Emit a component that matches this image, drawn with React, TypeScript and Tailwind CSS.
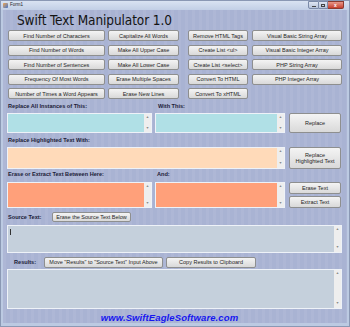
import React from 'react';

const Btn: React.FC<{ label: React.ReactNode; className?: string }> = ({ label, className = '' }) => (
    <button
        className={`flex items-center justify-center rounded-[2px] border border-[#8e8f8f] bg-gradient-to-b from-[#f4f4f4] to-[#d9d9d9] text-[5.5px] leading-[6px] text-[#1e1e1e] text-center ${className}`}
    >
        {label}
    </button>
);

const ScrollBar: React.FC = () => (
    <div className="w-[7px] h-full bg-[#eeeeee] flex flex-col justify-between items-center py-[2px] text-[3.5px] leading-none text-[#8a8a8a]">
        <span>▲</span>
        <span>▼</span>
    </div>
);

const Box: React.FC<{ className: string; scroll?: boolean }> = ({ className, scroll = true }) => (
    <div className={`flex justify-end border border-[#eef2f8] ${className}`}>
        {scroll && <ScrollBar />}
    </div>
);

const Label: React.FC<{ text: string; className?: string }> = ({ text, className = '' }) => (
    <span className={`text-[5.6px] font-bold leading-none text-[#1c1c38] ${className}`}>{text}</span>
);

const grid = [
    ['Find Number of Characters', 'Capitalize All Words', 'Remove HTML Tags', 'Visual Basic String Array'],
    ['Find Number of Words', 'Make All Upper Case', 'Create List <ul>', 'Visual Basic Integer Array'],
    ['Find Number of Sentences', 'Make All Lower Case', 'Create List <select>', 'PHP String Array'],
    ['Frequency Of Most Words', 'Erase Multiple Spaces', 'Convert To HTML', 'PHP Integer Array'],
    ['Number of Times a Word Appears', 'Erase New Lines', 'Convert To xHTML', ''],
];

export default function App() {
    return (
        <div className="w-[350px] h-[327px] bg-[#bccae2] border border-[#8a98b4] flex flex-col overflow-hidden" style={{ fontFamily: '"Liberation Sans", Arial, sans-serif' }}>
            {/* Title bar */}
            <div className="h-[9px] flex items-center justify-between bg-gradient-to-b from-[#d9e3f2] to-[#c2cfe6] pl-[2px]">
                <div className="flex items-center gap-[2px]">
                    <div className="w-[5px] h-[5px] bg-gradient-to-br from-[#f0a030] to-[#3a70c8] rounded-[1px]"></div>
                    <span className="text-[4.5px] text-[#222] leading-none">Form1</span>
                </div>
                <div className="flex items-start h-full pr-[5px]">
                    <div className="w-[11px] h-[8px] rounded-bl-[2px] border border-[#7b8aa8] bg-gradient-to-b from-[#dfe6f2] to-[#b6c3da] flex items-end justify-center pb-[1px]">
                        <div className="w-[4px] h-[1px] bg-[#444]"></div>
                    </div>
                    <div className="w-[9px] h-[8px] border-y border-r border-[#7b8aa8] bg-gradient-to-b from-[#dfe6f2] to-[#b6c3da] flex items-center justify-center">
                        <div className="w-[4px] h-[3px] border border-[#444]"></div>
                    </div>
                    <div className="w-[16px] h-[8px] rounded-br-[2px] border-y border-r border-[#8a3a30] bg-gradient-to-b from-[#e8978a] to-[#c63c2c] flex items-center justify-center text-white text-[5px] font-bold leading-none">
                        x
                    </div>
                </div>
            </div>

            {/* Client area */}
            <div className="mx-[2px] h-[313px] bg-[#a9b3d3] bg-[repeating-linear-gradient(90deg,rgba(255,255,255,0.06)_0px,rgba(255,255,255,0.06)_3px,transparent_3px,transparent_7px)] pl-[4px] pr-[5px] flex flex-col">
                <h1 className="mt-[2px] ml-[10px] h-[17px] text-[13.5px] leading-[17px] tracking-[-0.1px] text-[#141414]" style={{ fontFamily: '"DejaVu Sans Condensed", "DejaVu Sans", sans-serif' }}>
                    Swift Text Manipulator 1.0
                </h1>

                {/* Button grid */}
                <div className="mt-[1px] flex flex-col gap-[3.5px]">
                    {grid.map((row, i) => (
                        <div key={i} className="flex h-[11px]">
                            <Btn label={row[0]} className="ml-[1px] w-[97px]" />
                            <Btn label={row[1]} className="ml-[3px] w-[71px]" />
                            <Btn label={row[2]} className="ml-[9px] w-[60px]" />
                            {row[3] && <Btn label={row[3]} className="ml-[4px] w-[90px]" />}
                        </div>
                    ))}
                </div>

                {/* Replace */}
                <div className="mt-[4px] h-[7px] flex items-center">
                    <Label text="Replace All Instances of This:" className="ml-[1px] w-[150px]" />
                    <Label text="With This:" />
                </div>
                <div className="mt-[3px] flex h-[22px]">
                    <Box className="w-[145px] bg-[#b0e0e6]" />
                    <Box className="ml-[3px] w-[130px] bg-[#b0e0e6]" />
                    <Btn label="Replace" className="ml-[4px] w-[52px]" />
                </div>

                <div className="mt-[4px] h-[7px] flex items-center">
                    <Label text="Replace Highlighted Text With:" className="ml-[1px]" />
                </div>
                <div className="mt-[3px] flex h-[23px]">
                    <Box className="w-[278px] bg-[#ffdab9]" />
                    <Btn label={<>Replace<br />Highlighted Text</>} className="ml-[4px] w-[52px]" />
                </div>

                <div className="mt-[3px] h-[7px] flex items-center">
                    <Label text="Erase or Extract Text Between Here:" className="ml-[1px] w-[149px]" />
                    <Label text="And:" />
                </div>
                <div className="mt-[4px] flex h-[26px]">
                    <Box className="w-[145px] bg-[#ffa07a]" />
                    <Box className="ml-[3px] w-[130px] bg-[#ffa07a]" />
                    <div className="ml-[4px] w-[52px] flex flex-col gap-[2px]">
                        <Btn label="Erase Text" className="h-[12px]" />
                        <Btn label="Extract Text" className="h-[12px]" />
                    </div>
                </div>

                {/* Source */}
                <div className="mt-[4px] h-[10px] flex items-center">
                    <Label text="Source Text:" className="ml-[1px] w-[44px]" />
                    <Btn label="Erase the Source Text Below" className="h-[10px] w-[79px]" />
                </div>
                <div className="mt-[3px] flex h-[29px] border border-[#eef2f8] bg-[#c5d0dc]">
                    <div className="flex-1 pl-[2px] pt-[3px]">
                        <div className="w-[1px] h-[6px] bg-[#333]"></div>
                    </div>
                    <ScrollBar />
                </div>

                {/* Results */}
                <div className="mt-[4px] h-[11px] flex items-center">
                    <Label text="Results:" className="ml-[7px] w-[30px]" />
                    <Btn label={'Move "Results" to "Source Text" Input Above'} className="h-[11px] w-[119px]" />
                    <Btn label="Copy Results to Clipboard" className="ml-[3px] h-[11px] w-[90px]" />
                </div>
                <div className="mt-[1px] flex h-[42px] border border-[#eef2f8] bg-[#c5d0dc] justify-end">
                    <ScrollBar />
                </div>

                <div className="mt-[3px] h-[12px] flex items-center justify-center pr-[10px]">
                    <span className="text-[9.5px] font-bold italic text-[#1616f0] leading-none tracking-[0.1px]">
                        www.SwiftEagleSoftware.com
                    </span>
                </div>
            </div>
        </div>
    );
}
